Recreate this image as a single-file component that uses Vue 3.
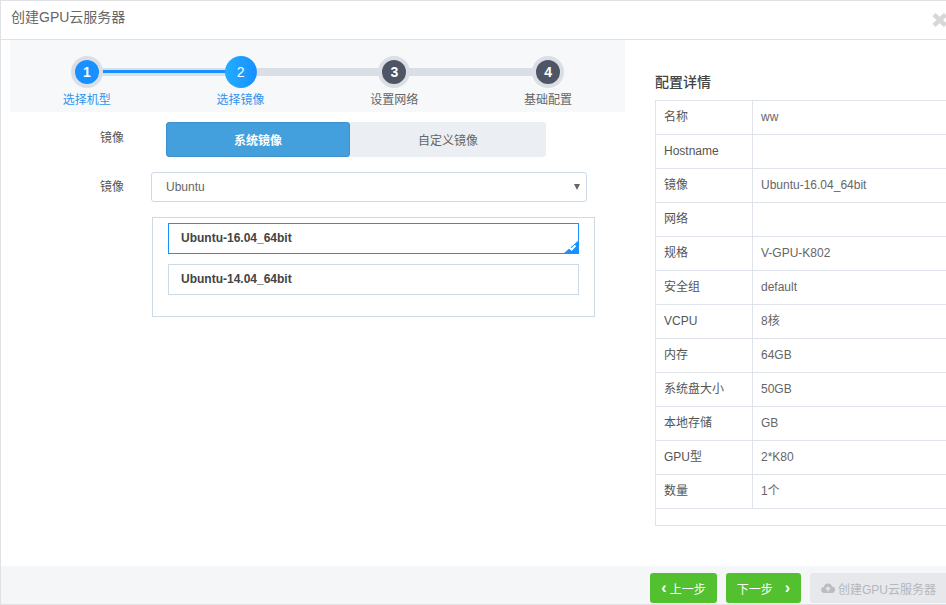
<script setup>
const steps = [
  { n: 1, label: '选择机型', state: 'done' },
  { n: 2, label: '选择镜像', state: 'current' },
  { n: 3, label: '设置网络', state: 'todo' },
  { n: 4, label: '基础配置', state: 'todo' }
]
const rows = [
  ['名称', 'ww'], ['Hostname', ''], ['镜像', 'Ubuntu-16.04_64bit'], ['网络', ''],
  ['规格', 'V-GPU-K802'], ['安全组', 'default'], ['VCPU', '8核'], ['内存', '64GB'],
  ['系统盘大小', '50GB'], ['本地存储', 'GB'], ['GPU型', '2*K80'], ['数量', '1个']
]
</script>

<template>
  <div class="win">
    <header class="head">
      <span class="title">创建GPU云服务器</span>
      <svg class="close" width="16" height="14" viewBox="0 0 16 14"><path d="M2 1.5 L13.5 12.5 M13.5 1.5 L2 12.5" stroke="#d8d8d8" stroke-width="4.5" fill="none"/></svg>
    </header>
    <div class="main">
      <section class="left">
        <div class="steps">
          <div v-for="s in steps" :key="s.n" class="step" :class="s.state">
            <div class="track">
              <span class="bar"></span>
              <span class="fill"></span>
              <span class="dot">{{ s.n }}</span>
            </div>
            <div class="slabel">{{ s.label }}</div>
          </div>
        </div>
        <div class="row tabrow">
          <label class="flabel">镜像</label>
          <div class="tabs">
            <div class="tab on">系统镜像</div>
            <div class="tab">自定义镜像</div>
          </div>
        </div>
        <div class="row selrow">
          <label class="flabel">镜像</label>
          <div class="select"><span>Ubuntu</span><i class="caret"></i></div>
        </div>
        <div class="list">
          <div class="item sel">Ubuntu-16.04_64bit
            <svg class="corner" width="16" height="14" viewBox="0 0 16 14"><path d="M16 0 V14 H0 Z" fill="#1890ff"/><path d="M6.5 7.5 L8.5 9.5 L12.5 5.5" stroke="#fff" stroke-width="2" fill="none"/></svg>
          </div>
          <div class="item">Ubuntu-14.04_64bit</div>
        </div>
      </section>
      <aside class="right">
        <h3 class="rtitle">配置详情</h3>
        <div class="table">
          <div v-for="r in rows" :key="r[0]" class="tr">
            <div class="k">{{ r[0] }}</div>
            <div class="v">{{ r[1] }}</div>
          </div>
          <div class="tail"></div>
        </div>
      </aside>
    </div>
    <footer class="foot">
      <button class="btn prev"><span class="chev">‹</span>上一步</button>
      <button class="btn next">下一步<span class="chev r">›</span></button>
      <button class="btn dis">
        <svg width="14" height="12" viewBox="0 0 14 12"><path d="M3.5 11 A3 3 0 0 1 3 5 A4 4 0 0 1 10.8 4.4 A3.3 3.3 0 0 1 10.8 11 Z" fill="#b9bcc2"/><path d="M7 9.5 V5.5 M5 7.2 L7 5.2 L9 7.2" stroke="#e6e8ec" stroke-width="1.3" fill="none"/></svg>
        创建GPU云服务器
      </button>
    </footer>
  </div>
</template>

<style>
html, body { margin: 0; background: #fff; }
</style>

<style scoped>
.win {
  width: 946px; height: 605px; box-sizing: border-box; overflow: hidden;
  border: 1px solid #dfe1e4; border-right: 0;
  display: flex; flex-direction: column;
  font-family: "Liberation Sans", "Noto Sans CJK SC", sans-serif;
  font-size: 12px; color: #555; background: #fff;
}
.head {
  flex: none; border-bottom: 1px solid #dfe1e4;
  display: flex; align-items: center; justify-content: space-between;
  padding: 0 0 4px 10px; box-sizing: content-box; height: 34px;
}
.title { font-size: 14px; color: #666; margin-top: -5px; }
.close { margin-right: -2px; margin-top: 3px; }
.main { flex: 1; display: flex; min-height: 0; }
.left { width: 615px; margin-left: 9px; flex: none; }
.steps { display: flex; background: #f7f8f9; height: 72px; }
.step { flex: 1; display: flex; flex-direction: column; align-items: center; }
.track { position: relative; width: 100%; height: 32px; margin-top: 16px; }
.bar { position: absolute; left: 50%; width: 100%; top: 12px; height: 8px; background: #dadfe6; }
.step:last-child .bar { display: none; }
.fill { display: none; }
.done .fill { display: block; position: absolute; left: 50%; width: 100%; top: 14px; height: 3px; background: #1890ff; }
.dot {
  position: absolute; left: 50%; top: 0; margin-left: -16px;
  width: 24px; height: 24px; border: 4px solid #dadfe6; border-radius: 50%;
  background: #4e5666; color: #fff; font-size: 14px; font-weight: bold;
  display: flex; align-items: center; justify-content: center;
}
.done .dot { background: #1890ff; }
.current .dot { border: 0; width: 32px; height: 32px; background: linear-gradient(90deg, #22adff, #1890ff); font-weight: normal; }
.slabel { margin-top: 3px; line-height: 18px; color: #666; }
.done .slabel, .current .slabel { color: #2d94f0; }
.row { display: flex; align-items: center; }
.flabel { width: 114px; margin-right: 1px; text-align: right; box-sizing: border-box; color: #555; flex: none; }
.tabrow { margin-top: 10px; }
.tabrow .flabel { margin-bottom: 6px; }
.selrow .flabel { margin-bottom: 4px; }
.tabs { margin-left: 41px; width: 380px; height: 35px; display: flex; background: #ebeff3; border-radius: 3px; }
.tab { flex: 1; display: flex; align-items: center; justify-content: center; color: #666; }
.tab.on { width: 184px; flex: none; box-sizing: border-box; background: #449fdd; border: 1px solid #3d90ce; border-radius: 3px; color: #fff; font-weight: bold; }
.selrow { margin-top: 15px; }
.select {
  margin-left: 26px; width: 436px; height: 30px; box-sizing: border-box;
  border: 1px solid #ccdae8; border-radius: 3px; padding: 0 6px 0 14px;
  display: flex; align-items: center; justify-content: space-between; color: #666;
}
.caret { width: 0; height: 0; border-left: 3px solid transparent; border-right: 3px solid transparent; border-top: 6px solid #666; }
.list {
  margin: 15px 0 0 142px; width: 443px; height: 100px; box-sizing: border-box;
  border: 1px solid #ccdae8; padding: 5px 15px 0;
}
.item {
  position: relative; height: 31px; box-sizing: border-box; border: 1px solid #ccdae8;
  padding-left: 12px; line-height: 28px; font-weight: bold; color: #444; margin-bottom: 10px;
}
.item.sel { border-color: #1890ff; }
.corner { position: absolute; right: -1px; bottom: -1px; }
.right { margin-left: 30px; flex: none; width: 320px; }
.rtitle { margin: 33px 0 9px; font-size: 14px; font-weight: 500; color: #444; line-height: 18px; }
.table { border: 1px solid #dfe4ec; border-right: 0; }
.tr { display: flex; height: 34px; box-sizing: border-box; border-bottom: 1px solid #dfe4ec; align-items: stretch; }
.k { width: 97px; box-sizing: border-box; border-right: 1px solid #dfe4ec; padding-left: 8px; line-height: 33px; color: #555; }
.v { padding-left: 8px; line-height: 33px; color: #666; }
.tail { height: 16px; }
.foot {
  height: 38px; flex: none; background: #f5f6f7; display: flex; align-items: flex-start;
  padding-left: 649px; gap: 9px; padding-top: 7px; box-sizing: border-box;
}
.btn {
  height: 30px; border: 0; border-radius: 3px; padding: 0; font: inherit; color: #fff;
  background: #52c02f; display: flex; align-items: center; justify-content: center; flex: none;
}
.prev { width: 67px; }
.next { width: 75px; }
.dis { width: 140px; background: #e6e8ec; color: #b4b7bd; justify-content: flex-start; padding-left: 11px; gap: 3px; }
.chev { font-size: 16px; font-weight: bold; line-height: 1; margin-right: 3px; }
.chev.r { margin: 0 0 0 12px; }
</style>
